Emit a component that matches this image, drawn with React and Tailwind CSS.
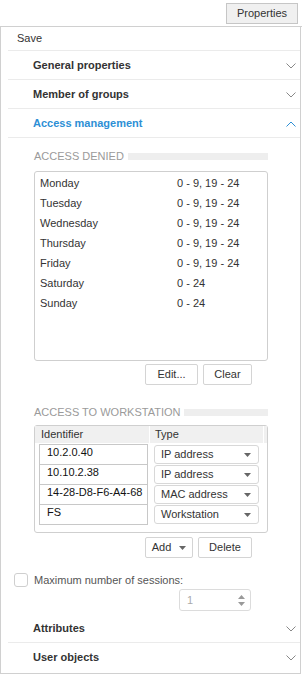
import { useState } from 'react';

function Chevron({ up, className }) {
  return (
    <svg width="10" height="6" viewBox="0 0 10 6" className={className}>
      <path d={up ? 'M0.5 5.5 L5 1 L9.5 5.5' : 'M0.5 0.5 L5 5 L9.5 0.5'} fill="none" stroke="currentColor" strokeWidth="1" />
    </svg>
  );
}

function Caret() {
  return (
    <svg width="7" height="4" viewBox="0 0 7 4" className="text-[#666]">
      <path d="M0 0 H7 L3.5 4 Z" fill="currentColor" />
    </svg>
  );
}

function SectionHeader({ title, open }) {
  return (
    <div className="ml-[7px] h-[29px] border-b border-[#ebebeb] flex items-center justify-between pl-[25px] pr-[4px] pt-[1px]">
      <span className={`font-bold ${open ? 'text-[#2d8fd5]' : 'text-[#333]'}`}>{title}</span>
      <Chevron up={open} className={open ? 'text-[#2d8fd5]' : 'text-[#888]'} />
    </div>
  );
}

function GroupLabel({ children }) {
  return (
    <div className="flex items-center h-[13px] gap-[4px]">
      <span className="text-[#9a9a9a] whitespace-nowrap">{children}</span>
      <div className="flex-1 h-[7px] bg-[#eeeeee]" />
    </div>
  );
}

function Btn({ children, className = '' }) {
  return (
    <button className={`h-[21px] border border-[#d4d4d4] rounded-[2px] bg-white text-[#333] flex items-center justify-center ${className}`}>
      {children}
    </button>
  );
}

const schedule = [
  ['Monday', '0 - 9, 19 - 24'],
  ['Tuesday', '0 - 9, 19 - 24'],
  ['Wednesday', '0 - 9, 19 - 24'],
  ['Thursday', '0 - 9, 19 - 24'],
  ['Friday', '0 - 9, 19 - 24'],
  ['Saturday', '0 - 24'],
  ['Sunday', '0 - 24'],
];

const workstations = [
  ['10.2.0.40', 'IP address'],
  ['10.10.2.38', 'IP address'],
  ['14-28-D8-F6-A4-68', 'MAC address'],
  ['FS', 'Workstation'],
];

export default function App() {
  const [limit, setLimit] = useState(false);
  return (
    <div className="w-[302px] h-[674px] bg-white text-[11px] leading-[13px] text-[#333] font-['Liberation_Sans',Arial,sans-serif]">
      <div className="h-[27px] border-b border-[#d0d0d0] flex justify-end pt-[3px] pr-[4px]">
        <button className="h-[21px] w-[72px] border border-[#c6c6c6] bg-[#f0f0f0] text-[#333] flex items-center justify-center">
          Properties
        </button>
      </div>
      <div className="w-[301px] h-[647px] border-l border-r border-b border-[#d0d0d0] flex flex-col">
        <div className="ml-[7px] h-[24px] border-b border-[#ebebeb] flex items-center pl-[9px]">Save</div>
        <SectionHeader title="General properties" />
        <SectionHeader title="Member of groups" />
        <SectionHeader title="Access management" open />

        <div className="pl-[33px] pr-[32px] pt-[12px]">
          <GroupLabel>ACCESS DENIED</GroupLabel>
          <div className="mt-[8px] h-[190px] border border-[#cfcfcf] rounded-[3px] pt-[1px]">
            {schedule.map(([day, hours]) => (
              <div key={day} className="h-[20px] flex items-center pl-[5px]">
                <span className="w-[137px]">{day}</span>
                <span>{hours}</span>
              </div>
            ))}
          </div>
          <div className="mt-[3px] flex justify-end gap-[5px] pr-[16px]">
            <Btn className="w-[53px]">Edit...</Btn>
            <Btn className="w-[49px]">Clear</Btn>
          </div>

          <div className="mt-[21px]">
            <GroupLabel>ACCESS TO WORKSTATION</GroupLabel>
          </div>
          <div className="mt-[6px] h-[108px] border border-[#cfcfcf] rounded-[3px]">
            <div className="h-[17px] bg-[#f0f0f0] flex">
              <div className="w-[115px] border-r border-white pl-[6px] flex items-center">Identifier</div>
              <div className="w-[114px] border-r border-white pl-[5px] flex items-center">Type</div>
            </div>
            <div className="pl-[4px] pt-[1px] flex flex-col">
              {workstations.map(([id, type]) => (
                <div key={id} className="h-[20px] flex">
                  <div className="w-[109px] h-[21px] -mb-[1px] border border-[#c8c8c8] pl-[7px] pt-[1px] text-[#111]">{id}</div>
                  <div className="ml-[6px] w-[105px] h-[19px] mt-[1px] border border-[#d8d8d8] rounded-[3px] flex items-center justify-between pl-[6px] pr-[7px]">
                    <span>{type}</span>
                    <Caret />
                  </div>
                </div>
              ))}
            </div>
          </div>
          <div className="mt-[4px] flex justify-end gap-[5px] pr-[16px]">
            <Btn className="w-[48px] gap-[8px]">Add <Caret /></Btn>
            <Btn className="w-[54px]">Delete</Btn>
          </div>
        </div>

        <div className="mt-[15px] pl-[13px] flex items-center gap-[6px]">
          <button
            onClick={() => setLimit(v => !v)}
            className={`w-[14px] h-[14px] border border-[#cfcfcf] rounded-[3px] ${limit ? 'bg-[#2d8fd5]' : 'bg-white'}`}
          />
          <span className="text-[#555]">Maximum number of sessions:</span>
        </div>
        <div className="mt-[2px] ml-[178px] w-[72px] h-[22px] border border-[#dcdcdc] rounded-[3px] flex items-center justify-between pl-[7px] pr-[5px]">
          <span className="text-[#aaa]">1</span>
          <div className="flex flex-col gap-[3px] text-[#999]">
            <svg width="7" height="4" viewBox="0 0 7 4"><path d="M0 4 H7 L3.5 0 Z" fill="currentColor" /></svg>
            <svg width="7" height="4" viewBox="0 0 7 4"><path d="M0 0 H7 L3.5 4 Z" fill="currentColor" /></svg>
          </div>
        </div>
        <div className="mt-[3px]">
          <SectionHeader title="Attributes" />
          <div className="ml-[7px] h-[29px] flex items-center justify-between pl-[25px] pr-[4px]">
            <span className="font-bold">User objects</span>
            <Chevron className="text-[#888]" />
          </div>
        </div>
      </div>
    </div>
  );
}
